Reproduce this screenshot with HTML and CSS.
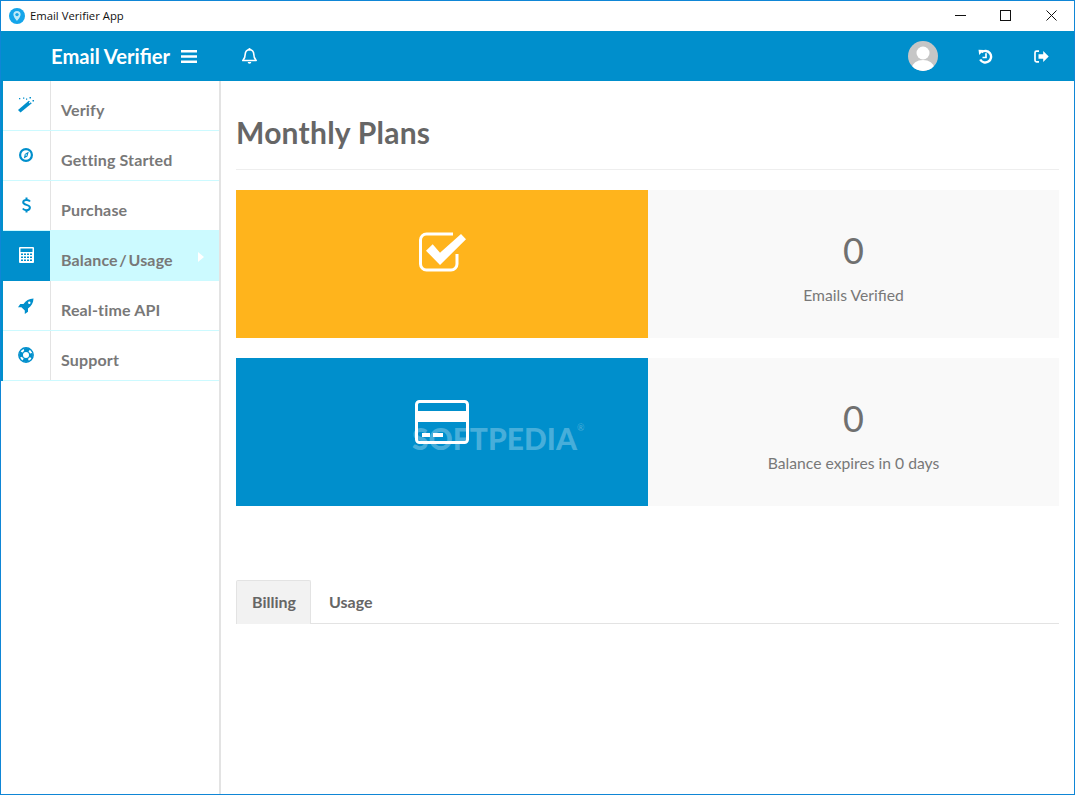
FILE: index.html
```html
<!DOCTYPE html>
<html lang="en">
<head>
<meta charset="utf-8">
<title>Email Verifier App</title>
<link rel="stylesheet" href="styles.css">
</head>
<body>
<div class="window">
  <div class="titlebar">
    <svg class="app-icon" width="16" height="16" viewBox="0 0 16 16"><circle cx="8" cy="8" r="8" fill="#14a5ea"/><path d="M8 3a3.600 3.600 0 0 0-3.600 3.600C4.400 9.200 8 13 8 13s3.600-3.800 3.600-6.400A3.600 3.600 0 0 0 8 3z" fill="#bfeaf8"/><circle cx="8" cy="6.600" r="1.700" fill="#14a5ea"/></svg>
    <span class="app-title">Email Verifier App</span>
    <div class="win-controls">
      <svg width="11" height="11" viewBox="0 0 11 11"><path d="M0 5.500h11" stroke="#111" fill="none"/></svg>
      <svg width="11" height="11" viewBox="0 0 11 11"><rect x=".5" y=".5" width="10" height="10" stroke="#111" fill="none"/></svg>
      <svg class="win-close" width="11" height="11" viewBox="0 0 11 11"><path d="M.5.500l10 10M10.500.500l-10 10" stroke="#111" fill="none"/></svg>
    </div>
  </div>
  <header class="topbar">
    <div class="brand">
      <span class="brand-name">Email Verifier</span>
      <svg width="16" height="13" viewBox="0 0 16 13"><path d="M0 0h16v2.600H0zM0 5.200h16v2.600H0zM0 10.400h16V13H0z" fill="#fff"/></svg>
    </div>
    <svg class="bell" width="17" height="17" viewBox="0 0 16 16"><path d="M8 1.500c-2.600 0-4 1.900-4 4.200 0 3.600-1.300 5-2.300 6.100h12.600C13.300 10.700 12 9.300 12 5.700c0-2.300-1.400-4.200-4-4.200z" fill="none" stroke="#fff" stroke-width="1.500" stroke-linejoin="round"/><path d="M6.300 13.200a1.700 1.700 0 0 0 3.400 0z" fill="#fff"/><circle cx="8" cy="1.200" r="1.100" fill="#fff"/></svg>
    <div class="top-actions">
      <svg width="30" height="30" viewBox="0 0 30 30"><defs><clipPath id="av"><circle cx="15" cy="15" r="15"/></clipPath></defs><circle cx="15" cy="15" r="15" fill="#c6c6c6"/><g clip-path="url(#av)" fill="#fff"><circle cx="15" cy="12" r="6.500"/><ellipse cx="15" cy="27" rx="11" ry="8"/></g></svg>
      <svg class="act-history" width="15" height="15" viewBox="0 0 15 15"><path d="M3.500 3.300A5.800 5.800 0 1 1 2.200 10.500" fill="none" stroke="#fff" stroke-width="2.400"/><path d="M0.500 .8l5.500 .3-4.800 4.800z" fill="#fff"/><path d="M8 4.200v4.300H4.500" fill="none" stroke="#fff" stroke-width="1.700"/></svg>
      <svg class="act-logout" width="15" height="13" viewBox="0 0 15 13"><path d="M5 1.200H2.500A1.500 1.500 0 0 0 1 2.700v7.600a1.500 1.500 0 0 0 1.500 1.500H5" fill="none" stroke="#fff" stroke-width="1.700"/><path d="M4.500 4.300h4.700V1l5.500 5.500-5.500 5.500V8.700H4.500z" fill="#fff"/></svg>
    </div>
  </header>
  <div class="body">
    <aside class="sidebar">
      <nav class="nav">
        <a class="nav-item"><span class="nav-icon icon-wand">
          <svg width="16" height="16" viewBox="0 0 16 16" fill="#008fcc"><path d="M0 13 10.800 3.800 13.800 6.300 2.500 15.500z"/><path d="M10.800 5.600l.9-.9 1 .9-.9.900z" fill="#fff"/><path d="M11.500 0h1.500v1.500h-1.500zM1 1h1.300v1.300H1zM5 .5h1.300v1.300H5zM14.500 3h1.500v1.500h-1.500zM8 1.500h1.200v1.200H8z"/></svg>
        </span><span class="nav-label">Verify</span></a>
        <a class="nav-item"><span class="nav-icon icon-compass">
          <svg width="14" height="14" viewBox="0 0 14 14"><circle cx="7" cy="7" r="5.900" fill="none" stroke="#008fcc" stroke-width="2.200"/><path d="M9.800 3.600 8.400 8.500 4.800 10.400 5.800 6z" fill="#008fcc"/><circle cx="7.200" cy="7" r=".8" fill="#fff"/></svg>
        </span><span class="nav-label">Getting Started</span></a>
        <a class="nav-item"><span class="nav-icon icon-dollar">
          <svg width="9" height="16" viewBox="0 0 9 16"><path d="M8 4.400C7.400 3.400 6 2.900 4.500 2.900 2.500 2.900 1.200 3.900 1.200 5.300c0 3.400 6.700 1.800 6.700 5.300 0 1.600-1.400 2.600-3.400 2.600-1.600 0-3-.6-3.700-1.700" fill="none" stroke="#008fcc" stroke-width="2"/><path d="M3.500 0.500h2v2.500h-2zM3.500 13h2v2.500h-2z" fill="#008fcc"/></svg>
        </span><span class="nav-label">Purchase</span></a>
        <a class="nav-item active"><span class="nav-icon icon-calc">
          <svg width="15" height="16" viewBox="0 0 15 16"><path fill="#fff" d="M1 0h13a1 1 0 0 1 1 1v14a1 1 0 0 1-1 1H1a1 1 0 0 1-1-1V1a1 1 0 0 1 1-1z"/><path fill="#008fcc" d="M1.500 1.500h12V5h-12zM2 6.500h2v1.500H2zM5 6.500h2v1.500H5zM8 6.500h2v1.500H8zM11 6.500h2v1.500h-2zM2 9.500h2V11H2zM5 9.500h2V11H5zM8 9.500h2V11H8zM11 9.500h2V11h-2zM2 12.500h2V14H2zM5 12.500h2V14H5zM8 12.500h2V14H8zM11 12.500h2V14h-2z"/></svg>
        </span><span class="nav-label">Balance / Usage</span><span class="nav-caret"></span></a>
        <a class="nav-item"><span class="nav-icon icon-rocket">
          <svg width="16" height="16" viewBox="0 0 16 16" fill="#008fcc"><path d="M15.500.5C11 .7 7.800 2.600 5.500 6H2.300L0 9.200h3.400l3.400 3.400V16L10 13.700v-3.200c3.400-2.300 5.300-5.500 5.500-10z"/><circle cx="11.300" cy="4.700" r="1.200" fill="#fff"/></svg>
        </span><span class="nav-label">Real-time API</span></a>
        <a class="nav-item"><span class="nav-icon icon-ring">
          <svg width="16" height="16" viewBox="0 0 16 16"><circle cx="8" cy="8" r="7.200" fill="none" stroke="#008fcc" stroke-width="1.400"/><circle cx="8" cy="8" r="3.700" fill="none" stroke="#008fcc" stroke-width="1.400"/><circle cx="8" cy="8" r="5.400" fill="none" stroke="#008fcc" stroke-width="3" stroke-dasharray="5.500 2.980" stroke-dashoffset="2.750"/></svg>
        </span><span class="nav-label">Support</span></a>
      </nav>
    </aside>
    <main class="main">
      <h1 class="page-title">Monthly Plans</h1>
      <section class="stat">
        <div class="stat-icon amber">
          <svg width="48" height="40" viewBox="0 0 48 40"><path d="M39 22V32a6 6 0 0 1-6 6H8.500a6 6 0 0 1-6-6V8a6 6 0 0 1 6-6H35" fill="none" stroke="#fff" stroke-width="3"/><path d="M22 33 48 7.300 43 2 22 20.700 14.700 12.300 8 18.700z" fill="#fff"/></svg>
        </div>
        <div class="stat-body"><div class="stat-num">0</div><div class="stat-label">Emails Verified</div></div>
      </section>
      <section class="stat">
        <div class="stat-icon blue">
          <svg width="54" height="44" viewBox="0 0 54 44"><rect x="1.500" y="1.500" width="51" height="41" rx="3" fill="none" stroke="#fff" stroke-width="3"/><path d="M2 11h50v11H2z" fill="#fff"/><path d="M7 33h8v4H7zM18 33h10v4H18z" fill="#fff"/></svg>
          <div class="watermark"><span>SOFTPEDIA</span><span class="reg">®</span></div>
        </div>
        <div class="stat-body"><div class="stat-num">0</div><div class="stat-label">Balance expires in 0 days</div></div>
      </section>
      <div class="tabs">
        <a class="tab current">Billing</a>
        <a class="tab">Usage</a>
      </div>
    </main>
  </div>
</div>
</body>
</html>
```

FILE: styles.css
```css
* { box-sizing: border-box; }
html, body { margin: 0; height: 100%; }
body { font-family: "Lato", "Liberation Sans", sans-serif; color: #676767; background: #fff; }
.window { height: 795px; border: 1px solid #0f86d6; display: flex; flex-direction: column; overflow: hidden; }
.titlebar { height: 30px; display: flex; align-items: center; padding-left: 8px; background: #fff; flex: none; }
.app-icon { display: block; }
.app-title { font-family: "Open Sans", "Liberation Sans", sans-serif; font-size: 11.300px; color: #111; margin: -2px 0 0 5px; }
.win-controls { margin-left: auto; display: flex; gap: 34px; padding-right: 17px; }
.win-controls svg { display: block; margin-top: -1px; }
.win-controls .win-close { margin-left: 1px; }
.topbar { height: 50px; background: #008fcc; display: flex; align-items: center; flex: none; }
.brand { width: 220px; padding-left: 50px; display: flex; align-items: center; gap: 11px; color: #fff; }
.brand-name { font-size: 20.200px; font-weight: 700; }
.bell { margin-left: 20px; }
.top-actions { margin-left: auto; display: flex; align-items: center; padding-right: 25px; }
.act-history { margin-left: 40px; }
.act-logout { margin-left: 41px; }
.body { flex: 1; display: flex; min-height: 0; }
.sidebar { width: 220px; flex: none; border-right: 2px solid #e3e3e3; }
.nav { display: flex; flex-direction: column; border-left: 2px solid #008fcc; }
.nav-item { height: 50px; display: flex; border-bottom: 1px solid #ccfaff; }
.nav-icon { width: 48px; flex: none; border-right: 1px solid #e3e3e3; display: flex; justify-content: center; padding: 15px 1px 0 0; }
.nav-icon svg { display: block; }
.icon-wand, .icon-dollar { padding-top: 16px; }
.icon-compass { padding-top: 17px; }
.icon-calc, .icon-ring { padding-top: 16px; }
.icon-rocket { padding-top: 17px; }
.nav-label { font-size: 16px; letter-spacing: 0.150px; font-weight: 700; color: #787878; padding: 19px 0 0 10px; line-height: 20px; }
.nav-item.active { background: #ccfaff; position: relative; }
.nav-item.active .nav-label { word-spacing: -2.500px; }
.nav-item.active .nav-icon { background: #008fcc; border-right: 0; width: 47px; margin: 0 1px -1px 0; }
.nav-caret { position: absolute; right: 15px; top: 21px; border-left: 6px solid #fff; border-top: 5px solid transparent; border-bottom: 5px solid transparent; }
.main { flex: 1; padding: 0 15px; min-width: 0; }
.page-title { margin: 0 0 20px; height: 89px; padding-top: 30px; font-size: 30px; letter-spacing: 0.250px; line-height: 42px; font-weight: 700; color: #666; border-bottom: 1px solid #eee; }
.stat { height: 148px; display: flex; margin-bottom: 20px; }
.stat-icon { width: 412px; display: flex; align-items: center; justify-content: center; position: relative; }
.stat-icon.amber { background: #ffb41c; padding-bottom: 24px; }
.stat-icon.blue { background: #008fcc; padding-bottom: 20px; }
.stat-body { flex: 1; background: #f9f9f9; text-align: center; padding-top: 35px; }
.stat-num { font-size: 36px; line-height: 50px; color: #707070; }
.stat-label { font-size: 15.700px; line-height: 20px; margin-top: 10px; color: #787878; }
.watermark { position: absolute; left: 176px; top: 63px; display: flex; font-size: 30px; font-weight: 900; color: rgba(255,255,255,.28); line-height: 34px; }
.watermark .reg { font-size: 9px; font-weight: 400; line-height: 14px; }
.tabs { margin-top: 74px; height: 44px; display: flex; border-bottom: 1px solid #e3e3e3; }
.tab { height: 44px; padding: 0 18px; font-size: 16px; font-weight: 700; color: #666; line-height: 43px; }
.tab.current { background: #f2f2f2; border: 1px solid #e3e3e3; border-bottom: 0; padding: 0 14px 0 15px; line-height: 42px; border-radius: 2px 2px 0 0; }
```
